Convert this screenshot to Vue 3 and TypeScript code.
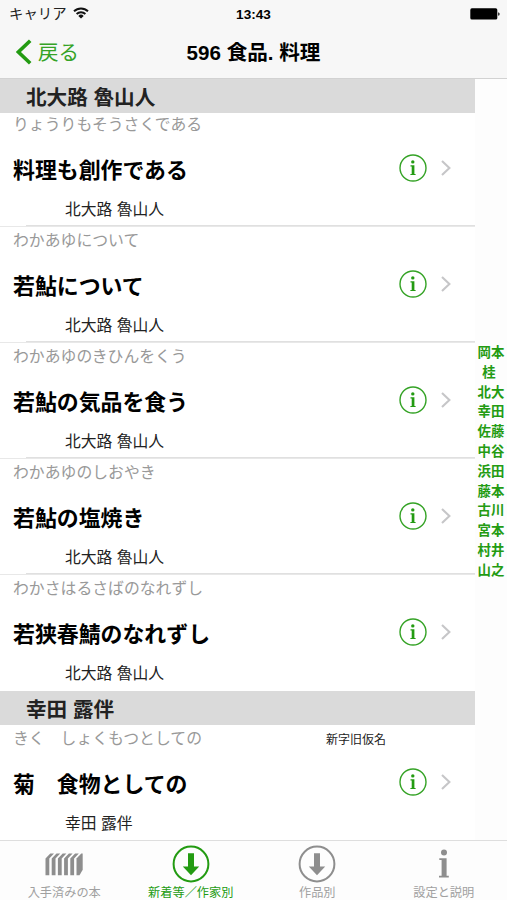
<script setup lang="ts">
interface Book {
  reading: string
  title: string
  note?: string
}
interface Section {
  author: string
  books: Book[]
}

const sections: Section[] = [
  {
    author: '北大路 魯山人',
    books: [
      { reading: 'りょうりもそうさくである', title: '料理も創作である' },
      { reading: 'わかあゆについて', title: '若鮎について' },
      { reading: 'わかあゆのきひんをくう', title: '若鮎の気品を食う' },
      { reading: 'わかあゆのしおやき', title: '若鮎の塩焼き' },
      { reading: 'わかさはるさばのなれずし', title: '若狭春鯖のなれずし' },
    ],
  },
  {
    author: '幸田 露伴',
    books: [{ reading: 'きく　しょくもつとしての', title: '菊　食物としての', note: '新字旧仮名' }],
  },
]

const indexTitles: string[] = [
  '岡本', '桂', '北大', '幸田', '佐藤', '中谷', '浜田', '藤本', '古川', '宮本', '村井', '山之',
]

const tabs = [
  { label: '入手済みの本', icon: 'books', active: false },
  { label: '新着等／作家別', icon: 'down', active: true },
  { label: '作品別', icon: 'down', active: false },
  { label: '設定と説明', icon: 'info', active: false },
]
</script>

<template>
  <div class="screen">
    <header class="top">
      <div class="status">
        <div class="carrier">
          <span>キャリア</span>
          <svg class="wifi" width="16" height="12" viewBox="0 0 16 12">
            <path d="M1 4.3a10 10 0 0 1 14 0M3.6 7a6.3 6.3 0 0 1 8.8 0" fill="none" stroke="#111" stroke-width="1.9" />
            <path d="M8 11.6 5.3 8.9a3.9 3.9 0 0 1 5.4 0z" fill="#111" />
          </svg>
        </div>
        <div class="time">13:43</div>
        <svg class="battery" width="30" height="12" viewBox="0 0 30 12">
          <rect x="0.3" y="0.3" width="27" height="11.2" rx="1.6" fill="#000" />
          <path d="M28.1 4.2q1.6.4 1.6 1.8t-1.6 1.8z" fill="#222" />
        </svg>
      </div>
      <nav class="nav">
        <div class="back">
          <svg width="17" height="26" viewBox="0 0 17 26">
            <path d="M14.2 1.8 2.4 13l11.8 11.2" fill="none" stroke="#239b12" stroke-width="3.6" />
          </svg>
          <span>戻る</span>
        </div>
        <h1>596 食品. 料理</h1>
      </nav>
    </header>

    <main class="content">
      <div class="list">
        <section v-for="section in sections" :key="section.author">
          <h2>{{ section.author }}</h2>
          <article v-for="book in section.books" :key="book.title" class="row">
            <div class="reading">
              <span>{{ book.reading }}</span>
              <small v-if="book.note">{{ book.note }}</small>
            </div>
            <div class="middle">
              <h3>{{ book.title }}</h3>
              <svg class="info" width="28" height="28" viewBox="0 0 28 28">
                <circle cx="14" cy="14" r="13" fill="none" stroke="#35a326" stroke-width="1.4" />
                <circle cx="13.8" cy="7.9" r="1.7" fill="#239b12" />
                <path d="M11.5 11.3h3.9v8.6h1.2v1.2h-5.2v-1.2h1.3v-7.4h-1.2z" fill="#239b12" />
              </svg>
              <svg class="chevron" width="12" height="18" viewBox="0 0 12 18">
                <path d="M2 2l7.4 7L2 16" fill="none" stroke="#c6c6c8" stroke-width="2.1" />
              </svg>
            </div>
            <div class="author">{{ section.author }}</div>
          </article>
        </section>
      </div>
      <aside class="index">
        <span v-for="name in indexTitles" :key="name">{{ name }}</span>
      </aside>
    </main>

    <footer class="tabs">
      <div v-for="tab in tabs" :key="tab.label" class="tab" :class="{ active: tab.active }">
        <div class="tab-icon">
          <svg v-if="tab.icon === 'books'" width="38" height="23" viewBox="0 0 38 23" fill="currentColor">
            <path
              v-for="n in 5"
              :key="n"
              :transform="`translate(${(n - 1) * 6.2} 0)`"
              d="M.5 5.5 5.3.6H9L4.3 5.5v16.7H.5z"
            />
            <path d="M31.5 5.5 36.3.6h1.4v16.2l-3.2 5.4h-3z" />
          </svg>
          <svg v-else-if="tab.icon === 'down'" width="38" height="38" viewBox="0 0 38 38">
            <circle cx="19" cy="19" r="17.4" fill="none" stroke="currentColor" stroke-width="2" />
            <path d="M16 8.2h6v13.4h5.2L19 30.2l-8.2-8.6H16z" fill="currentColor" />
          </svg>
          <svg v-else width="12" height="30" viewBox="0 0 12 30" fill="currentColor">
            <circle cx="6" cy="3.4" r="3" />
            <path d="M1.3 9.2h7.3v17.5h2.2v1.8H1v-1.8h2.6V11H1.3z" />
          </svg>
        </div>
        <span class="tab-label">{{ tab.label }}</span>
      </div>
    </footer>
  </div>
</template>

<style>
body {
  margin: 0;
}
</style>

<style scoped>
.screen {
  width: 507px;
  height: 900px;
  display: flex;
  flex-direction: column;
  overflow: hidden;
  background: #fff;
  color: #000;
  font-family: 'Liberation Sans', 'Noto Sans CJK JP', sans-serif;
}
h1,
h2,
h3 {
  margin: 0;
}
svg {
  display: block;
  flex: none;
}
.top {
  height: 79px;
  flex: none;
  box-sizing: border-box;
  background: #f7f7f7;
  border-bottom: 1px solid #d2d2d2;
}
.status {
  height: 26px;
  display: grid;
  grid-template-columns: 1fr auto 1fr;
  align-items: center;
  padding: 0 7px 0 9px;
  line-height: 26px;
}
.carrier {
  display: flex;
  align-items: center;
  gap: 6px;
  font-size: 14.4px;
  color: #222;
}
.wifi {
  margin-bottom: 2px;
}
.time {
  font-size: 13.6px;
  font-weight: 700;
  padding: 2px 2px 0 0;
}
.battery {
  justify-self: end;
}
.nav {
  height: 52px;
  display: grid;
  grid-template-columns: 1fr auto 1fr;
  align-items: center;
  padding: 0 16px;
}
.back {
  display: flex;
  align-items: center;
  gap: 5px;
  font-size: 20.5px;
  line-height: 30px;
  color: #35a326;
}
.back span {
  padding-top: 2px;
}
h1 {
  padding-top: 2px;
  font-size: 20.6px;
  line-height: 30px;
}
.content {
  height: 761px;
  flex: none;
  display: flex;
}
.list {
  width: 475px;
  flex: none;
}
h2 {
  position: relative;
  box-sizing: border-box;
  height: 34px;
  padding: 2px 0 0 26px;
  font-size: 20.6px;
  line-height: 34px;
  color: #222;
  background: #dadada;
}
section:first-child h2 {
  margin-bottom: -2px;
}
.row {
  height: 116px;
  display: grid;
  grid-template-rows: 26px 64px 16px;
  box-sizing: border-box;
  background: linear-gradient(#e0e0e0, #e0e0e0) 26px 114px / 449px 1px no-repeat;
  border-bottom: 1px solid #e8e8e8;
}
.row:last-child {
  background: none;
  border-bottom: 0;
}
.reading {
  display: flex;
  justify-content: space-between;
  padding: 1px 89px 0 13px;
  font-size: 15.85px;
  line-height: 26px;
  color: #999;
}
.reading small {
  padding-top: 1px;
  font-size: 12px;
  color: #222;
}
.middle {
  display: flex;
  align-items: center;
  padding: 0 23px 0 13px;
}
h3 {
  flex: 1;
  padding-top: 3px;
  font-size: 21.9px;
  line-height: 32px;
}
.info {
  margin: 0 13px 2px 0;
}
.chevron {
  margin-bottom: 2px;
}
.author {
  padding: 1px 0 0 65px;
  font-size: 15.8px;
  line-height: 16px;
  color: #222;
}
.index {
  flex: 1;
  display: flex;
  flex-direction: column;
  align-items: center;
  padding-top: 264px;
  font-size: 13.4px;
  font-weight: 700;
  line-height: 19.8px;
  color: #239b12;
  background: #fdfdfd;
}
.index span:nth-child(2) {
  padding-right: 4px;
}
.tabs {
  height: 60px;
  flex: none;
  box-sizing: border-box;
  display: grid;
  grid-template-columns: repeat(4, 1fr);
  padding-left: 1px;
  border-top: 1px solid #dedede;
  background: #fdfdfd;
}
.tab {
  display: flex;
  flex-direction: column;
  align-items: center;
  color: #8e8e8e;
}
.tab-icon {
  height: 42px;
  display: flex;
  align-items: center;
  padding-top: 2px;
}
.tab-label {
  padding-top: 1px;
  font-size: 12.2px;
  line-height: 14px;
  white-space: nowrap;
  color: #a0a0a0;
}
.tab.active,
.active .tab-label {
  color: #239b12;
}
</style>
